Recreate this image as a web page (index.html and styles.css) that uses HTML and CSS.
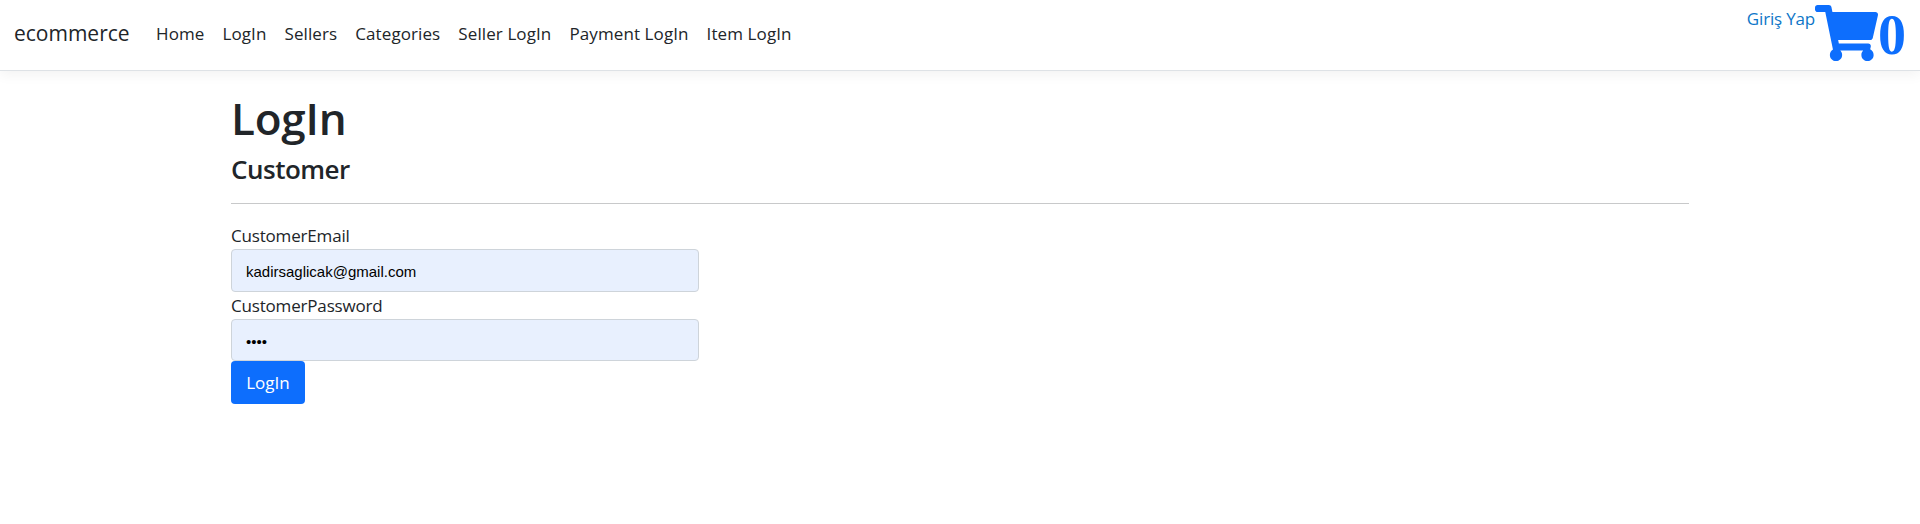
FILE: index.html
```html
<!DOCTYPE html>
<html lang="tr">
<head>
<meta charset="utf-8">
<title>LogIn - ecommerce</title>
<link rel="stylesheet" href="styles.css">
</head>
<body>
<header class="navbar">
  <a class="brand">ecommerce</a>
  <nav class="nav-links">
    <a>Home</a><a>LogIn</a><a>Sellers</a><a>Categories</a><a>Seller LogIn</a><a>Payment LogIn</a><a>Item LogIn</a>
  </nav>
  <div class="account">
    <a class="sign-in">Giriş Yap</a>
    <a class="cart">
      <svg class="cart-icon" viewBox="0 0 576 512" aria-hidden="true"><path fill="currentColor" d="M528.12 301.319l47.273-208C578.806 78.301 567.391 64 551.99 64H159.208l-9.166-44.81C147.758 8.021 137.93 0 126.529 0H24C10.745 0 0 10.745 0 24v16c0 13.255 10.745 24 24 24h69.883l70.248 343.435C147.325 417.1 136 435.222 136 456c0 30.928 25.072 56 56 56s56-25.072 56-56c0-15.674-6.447-29.835-16.824-40h209.647C430.447 426.165 424 440.326 424 456c0 30.928 25.072 56 56 56s56-25.072 56-56c0-22.172-12.888-41.332-31.579-50.405l5.517-24.276c3.413-15.018-8.002-29.319-23.403-29.319H218.117l-6.545-32h293.145c11.206 0 20.92-7.754 23.403-18.681z"/></svg>
      <span class="cart-count">0</span>
    </a>
  </div>
</header>
<main class="container">
  <h1>LogIn</h1>
  <h4>Customer</h4>
  <hr>
  <form class="form">
    <label for="email">CustomerEmail</label>
    <input class="field" id="email" type="text" value="kadirsaglicak@gmail.com">
    <label for="password">CustomerPassword</label>
    <input class="field field-password" id="password" type="password" value="1234">
    <button class="submit" type="button">LogIn</button>
  </form>
</main>
</body>
</html>
```
FILE: styles.css
```css
* { box-sizing: border-box; }
body {
  margin: 0;
  background: #fff;
  color: #212529;
  font: 400 17px/27px "Segoe UI", "Open Sans", "Noto Sans", sans-serif;
  letter-spacing: -0.18px;
}
.navbar {
  display: flex;
  height: 71px;
  padding: 0 14px 0 14px;
  border-bottom: 1px solid #dee2e6;
  box-shadow: 0 4px 12px rgba(0, 0, 0, .05);
}
.brand { width: 142px; padding-top: 17px; font-size: 21px; line-height: 32px; letter-spacing: 0; }
.nav-links { display: flex; gap: 18px; padding-top: 20px; white-space: nowrap; letter-spacing: 0.1px; }
.account { display: flex; margin-left: auto; padding-top: 5px; }
.sign-in { color: #0d76c8; }
.cart { display: flex; color: #0d6efd; }
.cart-icon { width: 63px; height: 56px; }
.cart-count {
  font: 700 56px/60px "Liberation Serif", serif;
  letter-spacing: 0;
}
.container { width: 1458px; margin: 0 auto; padding-top: 20px; }
h1 { margin: 0 0 8px; font-size: 44px; line-height: 54px; font-weight: 600; letter-spacing: -0.2px; }
h4 { margin: 0; font-size: 26px; line-height: 32px; font-weight: 600; letter-spacing: -0.5px; }
hr { height: 1px; margin: 18px 0 18px; border: 0; background: #c8c9ca; }
.form { display: flex; flex-direction: column; align-items: flex-start; }
.field {
  width: 468px;
  height: 43px;
  padding: 2px 14px 0;
  border: 1px solid #ced4da;
  border-radius: 4px;
  background: #e8f0fe;
  color: #000;
  font: 15px "Liberation Sans", Arial, sans-serif;
}
.field-password { height: 42px; }
.submit {
  width: 74px;
  height: 43px;
  padding: 0;
  border: 0;
  border-radius: 4px;
  background: #0d6efd;
  color: #fff;
  font: inherit;
}
```
